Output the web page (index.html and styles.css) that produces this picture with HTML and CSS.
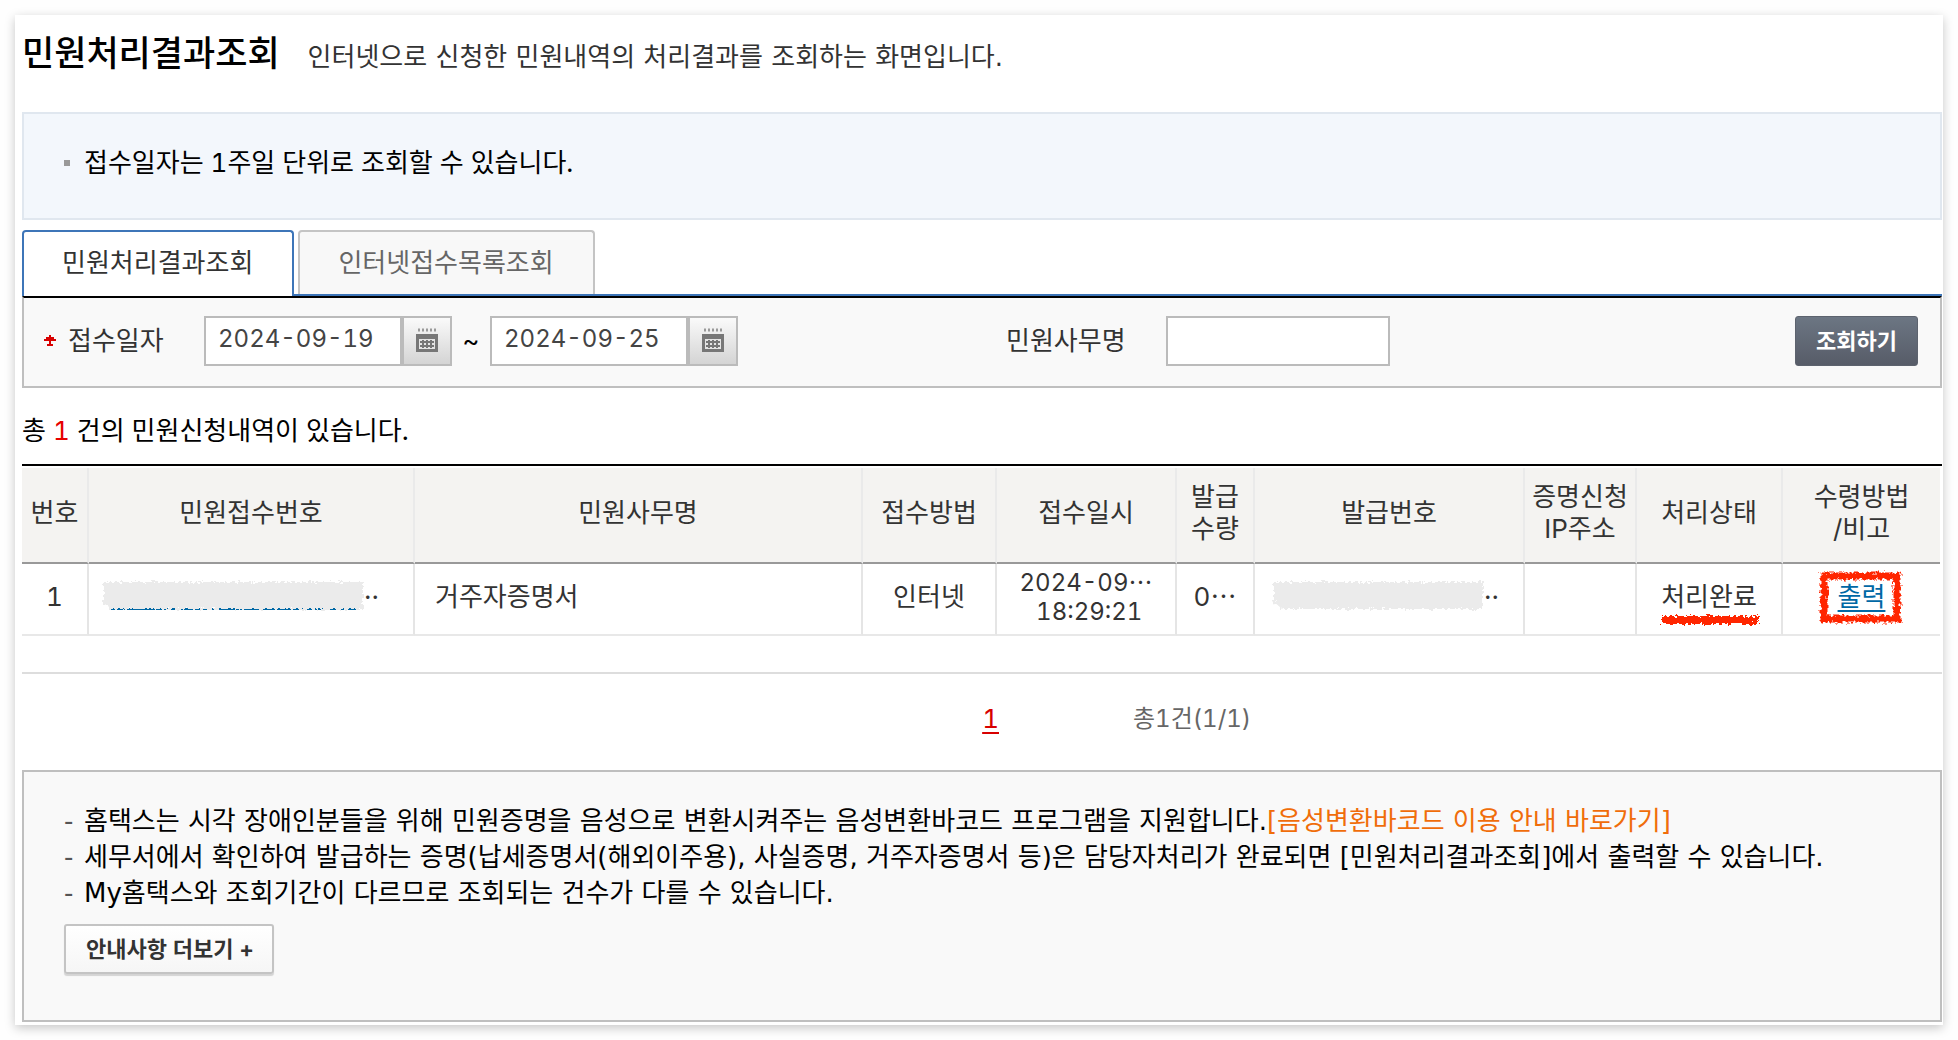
FILE: index.html
```html
<!DOCTYPE html>
<html lang="ko">
<head>
    <meta charset="UTF-8">
    <meta name="viewport" content="width=device-width, initial-scale=1.0">
    <title>민원처리결과조회</title>
    <link rel="stylesheet" href="styles.css">
</head>
<body>
    <svg class="defs" aria-hidden="true">
        <filter id="rough" x="-10%" y="-30%" width="120%" height="160%">
            <feTurbulence type="fractalNoise" baseFrequency="0.3" numOctaves="3" seed="4" />
            <feDisplacementMap in="SourceGraphic" scale="7" xChannelSelector="R" yChannelSelector="G" />
        </filter>
        <symbol id="calendar" viewBox="0 0 24 26">
            <path d="M3 2h18" stroke="#999" stroke-width="3" stroke-dasharray="2 2" />
            <path d="M1 6h22v18H1z" fill="#777" />
            <path d="M4 11h16v10H4z" fill="#e4e4e4" />
            <path d="M5 14h14M5 18h14M8 12v8M12 12v8M16 12v8" stroke="#777" stroke-width="2" />
        </symbol>
    </svg>

    <div class="container">
        <header class="page-title">
            <h1>민원처리결과조회</h1>
            <p>인터넷으로 신청한 민원내역의 처리결과를 조회하는 화면입니다.</p>
        </header>

        <ul class="info-box">
            <li>접수일자는 1주일 단위로 조회할 수 있습니다.</li>
        </ul>

        <nav class="tabs">
            <a href="#result" class="tab active">민원처리결과조회</a>
            <a href="#list" class="tab">인터넷접수목록조회</a>
        </nav>

        <form class="search">
            <svg class="required" viewBox="0 0 12 12" aria-hidden="true">
                <path d="M6 0v11M0 5h12M2 3h8M3 10h6" stroke="#d80000" stroke-width="2" />
            </svg>
            <label class="date-label" for="startDate">접수일자</label>
            <input type="text" class="date" id="startDate" value="2024-09-19">
            <button type="button" class="calendar" aria-label="시작일 선택"><svg><use href="#calendar" /></svg></button>
            <span class="tilde">~</span>
            <input type="text" class="date" id="endDate" value="2024-09-25" aria-label="종료일">
            <button type="button" class="calendar" aria-label="종료일 선택"><svg><use href="#calendar" /></svg></button>
            <label class="name-label" for="serviceName">민원사무명</label>
            <input type="text" class="name" id="serviceName">
            <button type="submit" class="submit">조회하기</button>
        </form>

        <p class="count">총 <span>1</span> 건의 민원신청내역이 있습니다.</p>

        <div class="result">
            <table>
                <colgroup>
                    <col class="c-no">
                    <col class="c-receipt">
                    <col>
                    <col class="c-method">
                    <col class="c-date">
                    <col class="c-qty">
                    <col class="c-issue">
                    <col class="c-ip">
                    <col class="c-state">
                    <col class="c-print">
                </colgroup>
                <thead>
                    <tr>
                        <th>번호</th>
                        <th>민원접수번호</th>
                        <th>민원사무명</th>
                        <th>접수방법</th>
                        <th>접수일시</th>
                        <th>발급<br>수량</th>
                        <th>발급번호</th>
                        <th>증명신청<br>IP주소</th>
                        <th>처리상태</th>
                        <th>수령방법<br>/비고</th>
                    </tr>
                </thead>
                <tbody>
                    <tr>
                        <td>1</td>
                        <td>
                            <div class="masked">
                                <a href="#receipt" aria-label="민원접수번호">
                                    <svg viewBox="0 0 262 32"><path d="M7 30h248" stroke="#0068a5" stroke-width="2" /><path d="M1 3h260v27H8l-7-7z" fill="#ebebeb" filter="url(#rough)" /></svg>
                                </a>
                                <span>··</span>
                            </div>
                        </td>
                        <td class="left">거주자증명서</td>
                        <td>인터넷</td>
                        <td class="datetime">2024-09⋯<br>&nbsp;18:29:21</td>
                        <td>0⋯</td>
                        <td>
                            <div class="masked issue">
                                <svg viewBox="0 0 212 32"><path d="M1 3h210v27H10l-9-8z" fill="#ebebeb" filter="url(#rough)" /></svg>
                                <span>··</span>
                            </div>
                        </td>
                        <td></td>
                        <td>
                            <span class="marked">처리완료
                                <svg class="underline" viewBox="0 0 104 16"><path d="M5 3h97v8H5z" fill="#ff2600" filter="url(#rough)" /></svg>
                            </span>
                        </td>
                        <td>
                            <span class="marked"><a href="#print">출력</a>
                                <svg class="box" viewBox="0 0 90 60"><path d="M7 9h73v43H7z" fill="none" stroke="#ff2600" stroke-width="7" filter="url(#rough)" /></svg>
                            </span>
                        </td>
                    </tr>
                </tbody>
            </table>
        </div>

        <div class="paging">
            <a href="#page1">1</a>
            <span>총1건(1/1)</span>
        </div>

        <section class="notice">
            <ul>
                <li>홈택스는 시각 장애인분들을 위해 민원증명을 음성으로 변환시켜주는 음성변환바코드 프로그램을 지원합니다.<a href="#barcode">[음성변환바코드 이용 안내 바로가기]</a></li>
                <li>세무서에서 확인하여 발급하는 증명(납세증명서(해외이주용), 사실증명, 거주자증명서 등)은 담당자처리가 완료되면 [민원처리결과조회]에서 출력할 수 있습니다.</li>
                <li>My홈택스와 조회기간이 다르므로 조회되는 건수가 다를 수 있습니다.</li>
            </ul>
            <button type="button">안내사항 더보기 +</button>
        </section>
    </div>
</body>
</html>
```
FILE: styles.css
```css
* {
    box-sizing: border-box;
}

body {
    margin: 0;
    padding: 15px;
    background-color: #fefefe;
    color: #333;
    font-family: Inter, "Noto Sans CJK KR", sans-serif;
    font-size: 26px;
    font-variant-numeric: tabular-nums;
    line-height: 36px;
}

input, button {
    font-family: inherit;
    font-variant-numeric: inherit;
    margin: 0;
}

h1, p, ul {
    margin: 0;
    padding: 0;
    font-weight: normal;
}

ul {
    list-style: none;
}

.defs {
    position: absolute;
    width: 0;
    height: 0;
}

.container {
    padding: 0 1px 3px 7px;
    background-color: #fff;
    box-shadow: 0 3px 10px rgba(0, 0, 0, 0.22);
}

.page-title {
    display: flex;
    align-items: baseline;
    gap: 28px;
    height: 97px;
    padding-top: 16px;
}

.page-title h1 {
    color: #000;
    font-size: 35px;
    font-weight: 500;
    line-height: 44px;
}

.page-title p, .notice ul {
    font-family: "DejaVu Sans", "Noto Sans CJK KR", sans-serif;
}

.info-box {
    height: 108px;
    padding: 31px 40px;
    border: 2px solid #e0e7ef;
    background-color: #f3f7fc;
    color: #000;
}

.info-box li {
    display: flex;
    align-items: center;
    gap: 14px;
}

.info-box li::before {
    content: "";
    width: 6px;
    height: 6px;
    background-color: #999;
}

/* tabs */
.tabs {
    display: flex;
    gap: 4px;
    margin-top: 10px;
    border-bottom: 2px solid #3d75b8;
}

.tab {
    height: 64px;
    padding: 13px 39px 13px 38px;
    border: 2px solid #c4c4c4;
    border-bottom: none;
    border-radius: 4px 4px 0 0;
    background-color: #f8f8f8;
    color: #666;
    text-decoration: none;
}

.tab.active {
    height: 66px;
    margin-bottom: -2px;
    border-color: #3d75b8;
    background-color: #fff;
    color: #333;
}

/* search form */
.search {
    display: flex;
    align-items: center;
    height: 92px;
    padding: 0 22px 2px 20px;
    border: 2px solid #bfbfbf;
    border-top-color: #000;
    background-color: #f9f9f9;
}

.search input {
    height: 50px;
    padding: 0 12px 6px;
    border: 2px solid #bbb;
    border-radius: 0;
    background-color: #fff;
    color: #444;
    font-size: 24px;
}

.search .required {
    width: 12px;
    height: 12px;
}

.date-label {
    width: 136px;
    margin-left: 12px;
}

.search .date {
    width: 198px;
}

.calendar {
    display: flex;
    align-items: center;
    justify-content: center;
    width: 50px;
    height: 50px;
    padding: 0;
    border: 2px solid #bbb;
    background: linear-gradient(#fafafa, #d4d4d4);
}

.calendar svg {
    width: 24px;
    height: 26px;
}

.tilde {
    width: 38px;
    color: #000;
    text-align: center;
}

.name-label {
    width: 160px;
    margin-left: 268px;
}

.search .name {
    width: 224px;
}

.submit {
    width: 123px;
    height: 50px;
    margin-left: auto;
    padding: 0 0 4px;
    border: 1px solid #5d636e;
    border-radius: 3px;
    background: linear-gradient(#6c7683, #575c68);
    color: #fff;
    font-size: 22px;
    font-weight: bold;
}

.count {
    margin: 25px 0 15px;
    color: #000;
}

.count span {
    color: #e60000;
}

/* result table */
.result {
    padding: 2px 2px 36px 0;
    border-top: 2px solid #000;
    border-bottom: 2px solid #ddd;
}

table {
    width: 100%;
    table-layout: fixed;
    border-collapse: separate;
    border-spacing: 0;
}

.c-no { width: 67px; }
.c-receipt { width: 326px; }
.c-method { width: 134px; }
.c-date { width: 180px; }
.c-qty { width: 78px; }
.c-issue { width: 270px; }
.c-ip { width: 112px; }
.c-state { width: 146px; }
.c-print { width: 157px; }

th, td {
    padding: 0 0 4px;
    border-right: 2px solid #e5e5e5;
    text-align: center;
    white-space: nowrap;
}

th:last-child, td:last-child {
    border-right: none;
}

th {
    height: 96px;
    border-bottom: 2px solid #999;
    border-right-color: #eaeaea;
    background-color: #f4f3f1;
    font-weight: normal;
    line-height: 32px;
}

td {
    height: 72px;
    border-bottom: 2px solid #e8e8e8;
}

td a {
    color: #0068a5;
    text-underline-offset: 4px;
}

td.left {
    padding-left: 20px;
    text-align: left;
}

td.datetime {
    font-size: 24px;
    line-height: 29px;
}

.masked {
    display: flex;
    padding-left: 13px;
}

.masked.issue {
    padding-left: 17px;
}

.masked svg {
    display: block;
    width: 262px;
    height: 32px;
}

.masked.issue svg {
    width: 212px;
}

.marked {
    position: relative;
}

/* pen marks over the cell text */
.marked svg {
    position: absolute;
    left: 50%;
    transform: translateX(-50%);
    pointer-events: none;
}

.marked .underline {
    top: 32px;
    width: 104px;
    height: 16px;
}

.marked .box {
    top: -14px;
    width: 90px;
    height: 60px;
}

/* paging */
.paging {
    display: grid;
    grid-template-columns: 1fr 1fr;
    align-items: center;
    gap: 134px;
    height: 96px;
    padding: 0 0 6px 168px;
    color: #666;
    font-size: 24px;
}

.paging a {
    justify-self: end;
    color: #d80000;
    font-size: 26px;
    text-underline-offset: 4px;
}

/* notice */
.notice {
    height: 252px;
    padding: 31px 40px;
    border: 2px solid #bfbfbf;
    background-color: #f9f9f9;
    color: #000;
}

.notice li {
    display: flex;
    white-space: nowrap;
}

.notice li::before {
    content: "-";
    width: 20px;
    color: #555;
}

.notice a {
    color: #f06d0a;
    text-decoration: none;
}

.notice button {
    height: 50px;
    margin-top: 13px;
    padding: 0 18px 4px 20px;
    border: 2px solid #c4c4c4;
    border-radius: 3px;
    background: linear-gradient(#fff, #f6f6f6);
    box-shadow: 0 2px 1px rgba(0, 0, 0, 0.15);
    color: #333;
    font-size: 22px;
    font-weight: bold;
}
```
